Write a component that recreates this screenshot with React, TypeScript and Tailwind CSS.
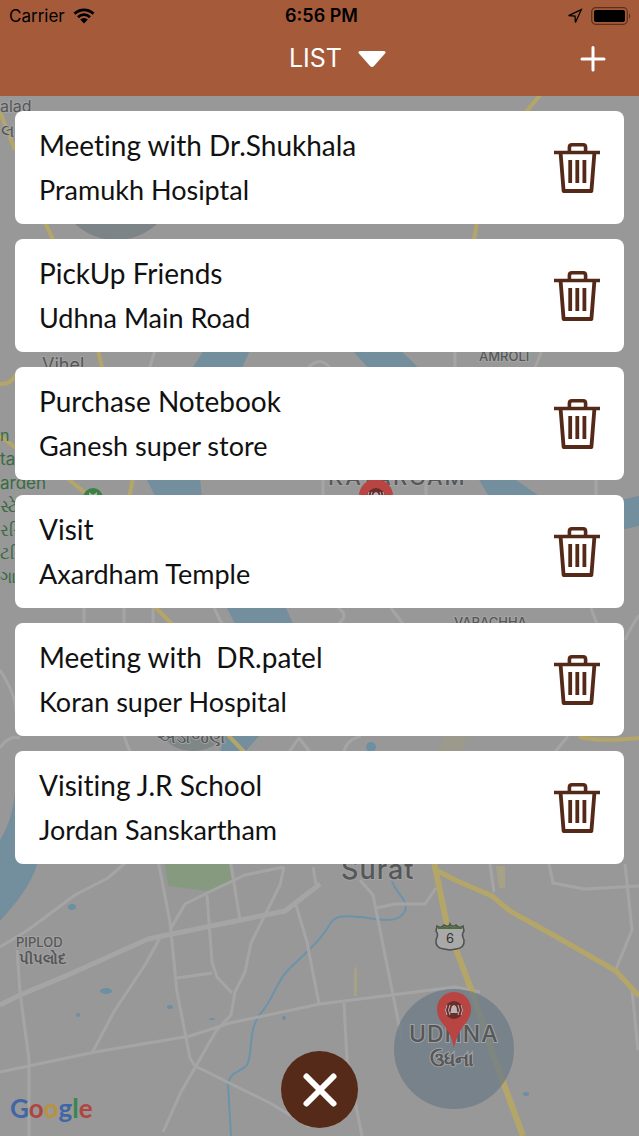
import { useState } from "react";

type Reminder = {
  id: number;
  title: string;
  place: string;
};

const initialReminders: Reminder[] = [
  { id: 1, title: "Meeting with Dr.Shukhala", place: "Pramukh Hosiptal" },
  { id: 2, title: "PickUp Friends", place: "Udhna Main Road" },
  { id: 3, title: "Purchase Notebook", place: "Ganesh super store" },
  { id: 4, title: "Visit", place: "Axardham Temple" },
  { id: 5, title: "Meeting with  DR.patel", place: "Koran super Hospital" },
  { id: 6, title: "Visiting J.R School", place: "Jordan Sanskartham" },
];

const minorRoads = [
  "M0 947 L28 930 L75 895 L108 878 L140 850",
  "M0 1072 L95 1052 L190 1036 L230 1023 L320 1004 L455 987 L480 992",
  "M156 850 L170 922 L177 992 L190 1058 L195 1066 L270 1103 L310 1127",
  "M170 930 L185 904 L205 894 L245 875 L284 867",
  "M228 846 L240 920",
  "M207 895 L212 962 L217 977 L232 993",
  "M177 978 L212 973",
  "M92 1053 L115 1010 L145 965 L162 934",
  "M284 867 L280 885 L251 943 L245 972 L235 992 L231 1015 L216 1031 L181 1092 L163 1132",
  "M17 950 L20 992 L29 1060 L29 1136",
  "M296 905 L307 942 L319 1004",
  "M360 880 L373 895 L380 930 L393 995 L402 1040",
  "M344 1003 L347 1060 L362 1136",
  "M376 908 L395 904 L425 904 L436 888",
  "M313 867 L316 884",
  "M490 864 L494 892",
  "M549 864 L553 883 L584 889 L639 886",
  "M625 864 L632 930 L616 969 M632 990 L638 1050",
  "M0 670 Q16 695 16 712 M0 748 Q8 735 20 738",
  "M155 350 L149 370 M455 350 V368 M542 350 L535 368 M308 368 Q320 355 330 368",
  "M323 480 V496 M426 480 V496 M596 480 V496",
  "M84 608 V624 M124 608 V624 M153 608 V624 M214 608 L222 624 M338 608 Q350 615 338 624 M391 608 L403 624 M591 608 L597 624",
  "M625 640 Q632 625 639 615",
  "M124 736 L130 752 M289 752 L299 738 L310 752 M344 752 Q346 740 361 736 M555 752 L568 736",
];

const ponds = [
  { cx: 72, cy: 907, rx: 4, ry: 3 },
  { cx: 106, cy: 991, rx: 6, ry: 3 },
  { cx: 170, cy: 1007, rx: 3, ry: 2 },
  { cx: 78, cy: 1015, rx: 2, ry: 2 },
  { cx: 212, cy: 1019, rx: 3, ry: 1 },
  { cx: 284, cy: 1018, rx: 2, ry: 2 },
  { cx: 526, cy: 1094, rx: 3, ry: 2 },
  { cx: 371, cy: 747, rx: 5, ry: 5 },
];

function MapPin({ x, y }: { x: number; y: number }) {
  return (
    <g transform={`translate(${x} ${y})`}>
      <path
        d="M0 56 C-2 46 -6 38 -11 32 C-15 27 -17 23 -17 17 A17 17 0 0 1 17 17 C17 23 15 27 11 32 C6 38 2 46 0 56Z"
        fill="#b94543"
      />
      <circle cx="0" cy="18" r="9" fill="#682e2c" />
      <path
        d="M0 13 C3 14 3 17 3 19 L4 21 H-4 L-3 19 C-3 17 -3 14 0 13Z"
        fill="#bdb4b2"
      />
      <path
        d="M-4 13 Q-7 18 -4 23 M4 13 Q7 18 4 23 M-7 13 Q-10 18 -7 23 M7 13 Q10 18 7 23"
        fill="none"
        stroke="#bdb4b2"
        strokeWidth="1"
      />
    </g>
  );
}

function MapBackground() {
  return (
    <svg
      viewBox="0 0 639 1136"
      preserveAspectRatio="xMidYMid slice"
      className="absolute inset-0 h-full w-full"
      role="img"
      aria-label="Map"
    >
      <rect width="639" height="1136" fill="#999898" />

      {/* Parks and water */}
      <path d="M165 864 H229 L232 882 L208 891 L168 886Z" fill="#869a80" />
      <path d="M496 866 h9 v22 h-6z M354 970 l3 -4 v30 h-3z" fill="#a7a287" />
      <path d="M444 736 H467 L462 752 H438Z" fill="#9c9a8c" />
      <g fill="#738e9d">
        <path d="M0 840 C14 818 16 790 15 780 L40 780 L38 862 C30 888 14 905 0 921Z" />
        <path d="M204 350 L250 350 L240 372 L190 372Z" />
        <path d="M352 350 L400 350 L423 372 L372 372Z" />
        <path d="M146 478 L200 478 L202 498 L156 498Z" />
        <path d="M478 478 L513 478 L542 498 L490 498Z" />
        <path d="M620 500 L639 496 V526 L620 530Z" />
        <path d="M226 606 L285 606 L294 626 L236 626Z" />
        <path d="M224 735 H260 L243 754 H220Z" />
      </g>
      <path
        d="M392 881 C396 894 409 900 405 911 C400 924 378 920 362 917 C345 916 336 914 330 924 C320 942 300 958 288 970 C276 982 274 998 261 1013 C247 1030 254 1050 247 1065 C239 1074 231 1070 228 1084 L231 1136"
        fill="none"
        stroke="#6c93ab"
        strokeWidth="2"
      />
      {ponds.map((pond) => (
        <ellipse key={`${pond.cx}-${pond.cy}`} {...pond} fill="#6c8fa4" />
      ))}

      {/* Roads */}
      <g fill="none" stroke="#a6a5a5" strokeWidth="3" strokeLinejoin="round">
        {minorRoads.map((d) => (
          <path key={d} d={d} />
        ))}
        <path
          d="M0 1005 L20 995 L68 975 L148 939 L172 934 L285 911 L320 884"
          strokeWidth="5"
        />
      </g>
      <g fill="none" stroke="#b3a668" strokeLinejoin="round">
        <path
          d="M434 862 L447 925 L475 1000 L495 1060 L523 1136"
          strokeWidth="6"
        />
        <path
          d="M436 870 L455 880 L492 896 L510 911 L562 940 L616 971 L639 996"
          strokeWidth="5"
        />
        <path
          d="M541 94 L526 112 M0 112 L15 150 M477 222 L474 240 M45 222 L53 240"
          strokeWidth="4"
        />
        <path
          d="M98 350 L103 372 M0 384 Q10 385 16 375 M67 478 L84 492 L90 500 M133 478 L129 498 M154 606 L174 626 M228 735 L246 754"
          strokeWidth="4"
        />
        <path d="M579 737 Q600 742 639 738 M0 436 L16 448" strokeWidth="4" />
      </g>

      {/* Reminder radius */}
      <circle cx="116" cy="180" r="60" fill="#7c8488" />
      <circle cx="454" cy="1049" r="60" fill="#6e7b87" fillOpacity="0.75" />
      <ellipse cx="193" cy="736" rx="27" ry="15" fill="#7f8786" />

      {/* Place names */}
      <g
        fontFamily="Inter, 'Noto Sans', sans-serif"
        fill="#555759"
        stroke="#a3a3a3"
        strokeWidth="2"
        paintOrder="stroke"
        fontWeight="500"
      >
        <text x="0" y="112" fontSize="16" fontWeight="400">alad</text>
        <text x="1" y="137" fontSize="18" fontWeight="400">લ</text>
        <text x="42" y="371" fontSize="18" fontWeight="400">Vihel</text>
        <text x="479" y="361" fontSize="13">AMROLI</text>
        <text x="328" y="485" fontSize="22" letterSpacing="2">KATARGAM</text>
        <text x="454" y="627" fontSize="13">VARACHHA</text>
        <text x="156" y="743" fontSize="19">અડાજણ</text>
        <text x="341" y="879" fontSize="27" letterSpacing="1">Surat</text>
        <text x="16" y="947" fontSize="13">PIPLOD</text>
        <text x="19" y="964" fontSize="15" fontWeight="700">પીપલોદ</text>
        <text x="409" y="1042" fontSize="23" letterSpacing="1">UDHNA</text>
        <text x="430" y="1066" fontSize="19" fontWeight="700">ઉધના</text>
      </g>
      <g
        fontFamily="Inter, 'Noto Sans', sans-serif"
        fontSize="17"
        fill="#376b42"
      >
        <text x="0" y="441" fontSize="16">n Pa</text>
        <text x="0" y="465">ta</text>
        <text x="0" y="489">arden</text>
        <text x="0" y="512">સ્ટે</text>
        <text x="0" y="536">રરિ</text>
        <text x="0" y="559">ટરિ</text>
        <text x="0" y="583">ગા</text>
      </g>

      {/* Highway shield */}
      <path
        d="M437 926 Q441 929 444 925 Q449 928 450 924 Q452 928 456 925 Q459 929 463 926 L464 931 Q461 934 464 940 Q465 948 456 949 L450 950 L444 949 Q435 948 436 940 Q439 934 436 931Z"
        fill="#a9a9a9"
        stroke="#4d4f50"
        strokeWidth="1.5"
      />
      <path
        d="M438 926 Q441 929 444 926 Q449 929 450 925 Q452 929 456 926 Q459 929 462 926 V929 H438Z"
        fill="#4b6e3a"
      />
      <text
        x="450"
        y="943"
        fontSize="13"
        textAnchor="middle"
        fontFamily="Inter, sans-serif"
        fill="#333"
      >
        6
      </text>

      <circle cx="93" cy="498" r="10" fill="#3c8244" />
      <path d="M90 498 v-4 l3 2 l3 -2 v4" fill="none" stroke="#a5b5a4" strokeWidth="2" />
      <MapPin x={376} y={479} />
      <MapPin x={454} y={992} />

      <text
        x="10"
        y="1118"
        fontSize="26"
        fontFamily="Lato, sans-serif"
        fontWeight="700"
      >
        <tspan fill="#3f66a6">G</tspan>
        <tspan fill="#b04540">o</tspan>
        <tspan fill="#b8933a">o</tspan>
        <tspan fill="#3f66a6">g</tspan>
        <tspan fill="#3a8550">l</tspan>
        <tspan fill="#b04540">e</tspan>
      </text>
    </svg>
  );
}

function StatusBar() {
  return (
    <div className="grid h-8 grid-cols-3 items-center px-2 text-[17px] leading-8 text-black">
      <div className="flex items-center gap-2 pl-px">
        <span>Carrier</span>
        <svg width="22" height="16" viewBox="0 0 22 16" aria-hidden="true">
          <path
            d="M1.5 5.8 A13.4 13.4 0 0 1 20.5 5.8 M5 9.2 A8.5 8.5 0 0 1 17 9.2"
            fill="none"
            stroke="#000"
            strokeWidth="2.8"
          />
          <path d="M7.2 11.6 A5.4 5.4 0 0 1 14.8 11.6 L11 15.4Z" fill="#000" />
        </svg>
      </div>
      <span className="pl-1 text-center text-lg leading-8 font-semibold">6:56 PM</span>
      <div className="flex items-center justify-end gap-2">
        <svg width="16" height="16" viewBox="0 0 16 16" aria-hidden="true">
          <path
            d="M14.3 1.7 L1.6 7.6 L8 8 L8.4 14.4Z"
            fill="none"
            stroke="#000"
            strokeWidth="1.3"
          />
        </svg>
        <svg width="40" height="18" viewBox="0 0 40 18" aria-hidden="true">
          <rect x="0.7" y="0.7" width="35.6" height="16.6" rx="4" fill="none" stroke="#5c2f1c" strokeWidth="1.2" />
          <rect x="3" y="3" width="31" height="12" rx="2" fill="#000" />
          <path d="M38 6 Q40.4 9 38 12Z" fill="#5c2f1c" />
        </svg>
      </div>
    </div>
  );
}

function TrashIcon() {
  return (
    <svg width="46" height="52" viewBox="0 0 46 52" fill="none" stroke="#552918" aria-hidden="true">
      <path d="M0 10.5 H46" strokeWidth="3.6" />
      <path d="M15.4 10 V5.4 Q15.4 2.8 18 2.8 H29 Q31.6 2.8 31.6 5.4 V10" strokeWidth="3.6" />
      <path d="M6.6 11 L9.6 49 H37.4 L40.4 11" strokeWidth="3.8" strokeLinejoin="round" />
      <path d="M16.2 18 V41 M23.3 18 V41 M30.4 18 V41" strokeWidth="3.8" />
    </svg>
  );
}

function ReminderCard({
  reminder,
  onDelete,
}: {
  reminder: Reminder;
  onDelete: (id: number) => void;
}) {
  return (
    <li className="flex items-center justify-between rounded-lg bg-white px-6 py-3 font-['Lato',sans-serif] text-[#111] [font-variant-ligatures:none]">
      <div className="min-w-0 whitespace-pre">
        <h2 className="text-[28px] leading-[44px]">{reminder.title}</h2>
        <p className="text-[27px] leading-[45px]">{reminder.place}</p>
      </div>
      <button
        type="button"
        aria-label={`Delete ${reminder.title}`}
        onClick={() => onDelete(reminder.id)}
      >
        <TrashIcon />
      </button>
    </li>
  );
}

export default function App() {
  const [reminders, setReminders] = useState(initialReminders);

  const handleDelete = (id: number) =>
    setReminders((current) => current.filter((item) => item.id !== id));

  return (
    <div className="relative flex min-h-screen flex-col overflow-hidden font-['Inter',sans-serif]">
      <MapBackground />

      <header className="relative bg-[#a55b3a]">
        <StatusBar />
        <div className="grid h-16 grid-cols-[1fr_auto_1fr] items-start px-8">
          <button
            type="button"
            className="col-start-2 flex h-[54px] items-center gap-4 pl-9 text-[25px] text-white"
          >
            LIST
            <svg width="28" height="17" viewBox="0 0 28 17" aria-hidden="true">
              <path
                d="M2 0 H26 Q28.5 0.5 27 2.5 L16 15 Q14 17 12 15 L1 2.5 Q-0.5 0.5 2 0Z"
                fill="#fff"
              />
            </svg>
          </button>
          <button
            type="button"
            aria-label="Add reminder"
            className="flex h-[54px] items-center justify-self-end"
          >
            <svg width="28" height="28" viewBox="0 0 28 28" aria-hidden="true">
              <path d="M14 2.5 V25 M3 14 H25" stroke="#fff" strokeWidth="3" strokeLinecap="round" />
            </svg>
          </button>
        </div>
      </header>

      <main className="relative flex flex-1 flex-col items-center px-[15px] pt-[15px] pb-2">
        <ul className="flex w-full flex-col gap-[15px]">
          {reminders.map((reminder) => (
            <ReminderCard key={reminder.id} reminder={reminder} onDelete={handleDelete} />
          ))}
        </ul>
        <button
          type="button"
          aria-label="Close list"
          className="mt-auto flex size-[77px] shrink-0 items-center justify-center rounded-full bg-[#552a18]"
        >
          <svg width="36" height="36" viewBox="0 0 36 36" aria-hidden="true">
            <path d="M4.5 4.5 L31.5 31.5 M31.5 4.5 L4.5 31.5" stroke="#fff" strokeWidth="6" strokeLinecap="round" />
          </svg>
        </button>
      </main>
    </div>
  );
}
